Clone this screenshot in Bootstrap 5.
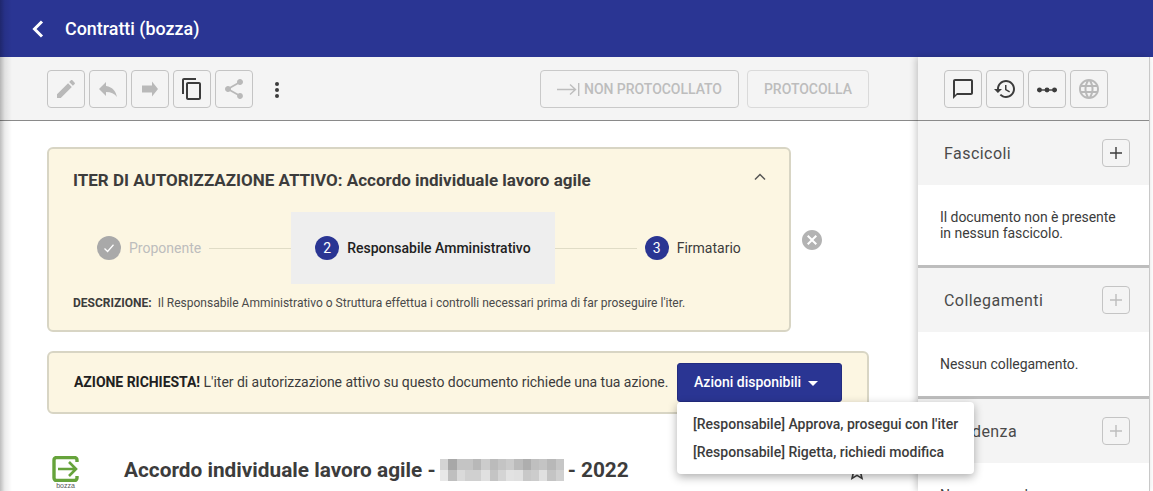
<!DOCTYPE html>
<html lang="it">
<head>
<meta charset="utf-8">
<title>Contratti (bozza)</title>
<link href="https://cdn.jsdelivr.net/npm/bootstrap@5.3.0/dist/css/bootstrap.min.css" rel="stylesheet">
<style>
html,body{height:491px;overflow:hidden;background:#fff}
body{font-family:Roboto,"Liberation Sans",sans-serif;font-size:14px;color:#3c3c3c;position:relative}
.edge-shade{position:absolute;left:0;top:0;width:12px;height:491px;background:linear-gradient(to right,rgba(0,0,0,.26),rgba(0,0,0,.08) 40%,rgba(0,0,0,0));pointer-events:none;z-index:5}
.top-bar{height:57px;background:#2a3593;color:#fff;padding-left:31px}
.top-bar h1{font-size:17.9px;font-weight:500;margin:0 0 0 20px}
.work{height:434px;padding-right:3px}
.main-col{width:918px;flex:none}
.tool-row{height:64px;background:#f4f4f4;border-bottom:1px solid #8a8a8a;padding:13px 49px 0 47px}
.icon-btn{width:38px;height:38px;padding:0;border:1px solid #c4c4c4;border-radius:4px;background:transparent;display:flex;align-items:center;justify-content:center;flex:none}
.icon-btn svg{width:24px;height:24px;fill:#b9b9b9}
.icon-btn.live svg{fill:#3c3c3c}
.dots-btn{width:24px;height:38px;margin-left:12px}
.dots-btn svg{width:24px;height:24px;fill:#3c3c3c}
.proto-btn{height:38px;border:1px solid #c9c9c9;border-radius:4px;background:transparent;color:#bdbdbd;font-weight:500;font-size:14px;padding:0;letter-spacing:-.03px}
.proto-wide{width:199px}
.proto-narrow{width:122px;border-color:#dadada}
.iter-box{width:744px;height:185px;margin:26px 0 0 47px;background:#fcf6e2;border:2px solid #d8d5c4;border-radius:6px;padding:0 24px;position:relative}
.iter-box h2{font-size:17px;font-weight:700;margin:0;line-height:20px;padding-top:21px;color:#3c3c3c}
.chev{position:absolute;right:20px;top:19px;width:18px;height:18px}
.steps{margin-top:22px;height:72px}
.step-item{height:72px;padding:0 8px 0 24px}
.step-item.now{background:#eee;padding:0 24px;color:#212121;font-weight:500}
.step-item.last{padding-left:8px}
.step-item.done{color:#bdbdbd}
.step-dot{width:24px;height:24px;border-radius:50%;background:#2a3593;color:#fff;font-size:14px;flex:none}
.step-dot.ok{background:#a9a9a9}
.step-line{width:82px;height:1px;background:#e0dcc6;flex:none}
.descr{font-size:12px;margin-top:12px;line-height:14px;color:#4a4a4a}
.descr b{color:#3c3c3c;margin-right:3px;font-weight:700}
.close-ic{width:24px;height:24px;fill:#b3b3b3;position:absolute;left:751px;top:79px}
.action-box{width:822px;height:63px;margin:19px 0 0 47px;background:#fcf6e2;border:2px solid #d8d5c4;border-radius:6px;padding:0 25px;position:relative}
.action-box b{color:#212121}
.action-box .msg{color:#3c3c3c;letter-spacing:-.035px}
.go-btn{position:absolute;left:628px;top:10px;width:165px;height:39px;background:#2a3593;color:#fff;font-size:14px;font-weight:500;border:1px solid #232c80;border-radius:3px;padding:0 0 0 16px;text-align:left}
.go-btn::after{margin-left:7px;vertical-align:1px;border-top-width:5px;border-left-width:5px;border-right-width:5px}
.act-menu{position:absolute;left:628px;top:49px;width:297px;height:72px;margin:0;padding:8px 0;border:0;border-radius:4px;box-shadow:0 3px 10px rgba(0,0,0,.32);z-index:10;display:block}
.act-menu .dropdown-item{padding:0 16px;height:28px;line-height:28px;font-size:14px;font-weight:500;color:#3c3c3c}
.doc-row{margin:42px 0 0 52px;position:relative}
.logo-wrap{width:27px;flex:none;margin-right:45px;text-align:center}
.logo-wrap svg{display:block;width:27px;height:26px}
.logo-cap{display:block;font-family:"Liberation Sans",sans-serif;font-size:7px;line-height:7px;color:#555}
.doc-title{font-size:20.8px;font-weight:700;color:#3c3c3c;line-height:28px;margin:0;white-space:nowrap}
.mosaic{width:124px;height:22px;margin:0 4px 0 4px;flex:none}
.fav-star{position:absolute;left:793px;top:3px;width:24px;height:24px;fill:#3c3c3c}
.side-col{width:232px;flex:none;border-right:1px solid #c8c8c8;box-shadow:-2px 0 7px rgba(0,0,0,.2);position:relative;z-index:1;background:#fff;overflow:hidden}
.side-tools{height:64px;background:#f4f4f4;border-bottom:1px solid #8a8a8a;padding:13px 0 0 26px}
.side-head{height:64px;background:#f4f4f4;padding:0 19px 0 26px;font-size:16px;color:#4a4a4a;letter-spacing:.45px}
.side-head span{padding-top:2px}
.plus-btn{width:28px;height:28px;border:1px solid #c4c4c4;border-radius:4px;background:transparent;padding:0;display:flex;align-items:center;justify-content:center}
.plus-btn svg{width:16px;height:16px;fill:#3c3c3c}
.plus-btn.off svg{fill:#bdbdbd}
.side-body{padding:24px 19px 0 22px;line-height:16px;font-size:14px;color:#3c3c3c;border-bottom:3px solid #bdbdbd;letter-spacing:-.05px}
.sb-a{height:83px}
.sb-b{height:67px}
.sb-c{height:60px;border-bottom:0}
</style>
</head>
<body>
<div class="edge-shade"></div>
<header class="top-bar d-flex align-items-center">
  <svg width="14" height="20" viewBox="0 0 14 20" aria-hidden="true"><path d="M11 2.5 3.5 10 11 17.5" fill="none" stroke="#fff" stroke-width="3"/></svg>
  <h1>Contratti (bozza)</h1>
</header>
<div class="work d-flex">
  <div class="main-col">
    <div class="tool-row d-flex gap-1 justify-content-between">
      <div class="d-flex tool-set">
        <button class="icon-btn" type="button"><svg viewBox="0 0 24 24"><path d="M3 17.25V21h3.75L17.81 9.94l-3.75-3.75L3 17.25zM20.71 7.04c.39-.39.39-1.02 0-1.41l-2.34-2.34c-.39-.39-1.02-.39-1.41 0l-1.83 1.83 3.75 3.75 1.83-1.83z"/></svg></button>
        <button class="icon-btn ms-1" type="button"><svg viewBox="0 0 24 24"><path d="M10 9V5l-7 7 7 7v-4.1c5 0 8.5 1.6 11 5.1-1-5-4-10-11-11z"/></svg></button>
        <button class="icon-btn ms-1" type="button"><svg viewBox="0 0 24 24"><path d="M4 8.5h10V4.5l6 7.5-6 7.5v-4H4z"/></svg></button>
        <button class="icon-btn live ms-1" type="button"><svg viewBox="0 0 24 24"><path d="M16 1H4c-1.1 0-2 .9-2 2v14h2V3h12V1zm3 4H8c-1.1 0-2 .9-2 2v14c0 1.1.9 2 2 2h11c1.1 0 2-.9 2-2V7c0-1.1-.9-2-2-2zm0 16H8V7h11v14z"/></svg></button>
        <button class="icon-btn ms-1" type="button"><svg viewBox="0 0 24 24"><path d="M18 16.08c-.76 0-1.44.3-1.96.77L8.91 12.7c.05-.23.09-.46.09-.7s-.04-.47-.09-.7l7.05-4.11c.54.5 1.25.81 2.04.81 1.66 0 3-1.34 3-3s-1.34-3-3-3-3 1.34-3 3c0 .24.04.47.09.7L8.04 9.81C7.5 9.31 6.79 9 6 9c-1.66 0-3 1.34-3 3s1.34 3 3 3c.79 0 1.5-.31 2.04-.81l7.12 4.16c-.05.21-.08.43-.08.65 0 1.61 1.31 2.92 2.92 2.92 1.61 0 2.92-1.31 2.92-2.92s-1.31-2.92-2.92-2.92z"/></svg></button>
        <div class="dots-btn d-flex align-items-center justify-content-center"><svg viewBox="0 0 24 24"><circle cx="12" cy="7" r="2"/><circle cx="12" cy="13" r="2"/><circle cx="12" cy="19" r="2"/></svg></div>
      </div>
      <div class="d-flex gap-2">
        <button class="proto-btn proto-wide d-flex align-items-center justify-content-center" type="button"><svg class="me-1" width="23" height="14" viewBox="0 0 23 14" aria-hidden="true"><path d="M0 7.5h18M13 2.5l5.5 5-5.5 5M21.7 1v13" fill="none" stroke="#bdbdbd" stroke-width="1.4"/></svg>NON PROTOCOLLATO</button>
        <button class="proto-btn proto-narrow" type="button">PROTOCOLLA</button>
      </div>
    </div>

    <section class="iter-box">
      <h2>ITER DI AUTORIZZAZIONE ATTIVO: Accordo individuale lavoro agile</h2>
      <svg class="chev" viewBox="0 0 18 18" aria-hidden="true"><path d="M4 11.5 9 6.5l5 5" fill="none" stroke="#555" stroke-width="1.5"/></svg>
      <div class="steps d-flex align-items-center">
        <div class="step-item done d-flex align-items-center gap-2"><span class="step-dot ok d-flex align-items-center justify-content-center"><svg width="14" height="14" viewBox="0 0 14 14" aria-hidden="true"><path d="M2.5 7.5 5.6 10.5 11.5 3.8" fill="none" stroke="#fff" stroke-width="1.3"/></svg></span>Proponente</div>
        <div class="step-line"></div>
        <div class="step-item now d-flex align-items-center gap-2"><span class="step-dot d-flex align-items-center justify-content-center fw-normal">2</span>Responsabile Amministrativo</div>
        <div class="step-line"></div>
        <div class="step-item last d-flex align-items-center gap-2"><span class="step-dot d-flex align-items-center justify-content-center">3</span>Firmatario</div>
      </div>
      <p class="descr mb-0"><b>DESCRIZIONE:</b> Il Responsabile Amministrativo o Struttura effettua i controlli necessari prima di far proseguire l'iter.</p>
      <svg class="close-ic" viewBox="0 0 24 24" aria-hidden="true"><path d="M12 2C6.47 2 2 6.47 2 12s4.47 10 10 10 10-4.47 10-10S17.53 2 12 2zm5 13.59L15.59 17 12 13.41 8.41 17 7 15.59 10.59 12 7 8.41 8.41 7 12 10.59 15.59 7 17 8.41 13.41 12 17 15.59z"/></svg>
    </section>

    <section class="action-box d-flex align-items-center">
      <span class="msg"><b>AZIONE RICHIESTA!</b> L'iter di autorizzazione attivo su questo documento richiede una tua azione.</span>
      <button class="go-btn dropdown-toggle" type="button">Azioni disponibili</button>
      <ul class="dropdown-menu act-menu list-unstyled">
        <li><a class="dropdown-item" href="#">[Responsabile] Approva, prosegui con l'iter</a></li>
        <li><a class="dropdown-item" href="#">[Responsabile] Rigetta, richiedi modifica</a></li>
      </ul>
    </section>

    <div class="doc-row d-flex align-items-start">
      <div class="logo-wrap">
        <svg viewBox="0 0 27 26" aria-hidden="true"><path d="M25 6V4a2.5 2.5 0 0 0-2.5-2.5h-18A2.5 2.5 0 0 0 2 4v18a2.5 2.5 0 0 0 2.5 2.5h18A2.5 2.5 0 0 0 25 22v-2" fill="none" stroke="#66a33b" stroke-width="3.4"/><path d="M6 13h18M17 6l7 7-7 7" fill="none" stroke="#66a33b" stroke-width="2.6"/></svg>
        <span class="logo-cap">bozza</span>
      </div>
      <div class="d-flex align-items-center">
        <h3 class="doc-title">Accordo individuale lavoro agile -</h3>
        <svg class="mosaic" viewBox="0 0 15 2" preserveAspectRatio="none" aria-hidden="true" shape-rendering="crispEdges">
          <rect x="0" y="0" width="1" height="1" fill="#d4d4d4"/><rect x="1" y="0" width="1" height="1" fill="#a8a8a8"/><rect x="2" y="0" width="1" height="1" fill="#c4c4c4"/><rect x="3" y="0" width="1" height="1" fill="#c4c4c4"/><rect x="4" y="0" width="1" height="1" fill="#b8b8b8"/><rect x="5" y="0" width="1" height="1" fill="#cccccc"/><rect x="6" y="0" width="1" height="1" fill="#bbbbbb"/><rect x="7" y="0" width="1" height="1" fill="#c4c4c4"/><rect x="8" y="0" width="1" height="1" fill="#cbcbcb"/><rect x="9" y="0" width="1" height="1" fill="#bbbbbb"/><rect x="10" y="0" width="1" height="1" fill="#aeaeae"/><rect x="11" y="0" width="1" height="1" fill="#bfbfbf"/><rect x="12" y="0" width="1" height="1" fill="#c4c4c4"/><rect x="13" y="0" width="1" height="1" fill="#b8b8b8"/><rect x="14" y="0" width="1" height="1" fill="#c6c6c6"/>
          <rect x="0" y="1" width="1" height="1" fill="#e8e8e8"/><rect x="1" y="1" width="1" height="1" fill="#bfbfbf"/><rect x="2" y="1" width="1" height="1" fill="#dadada"/><rect x="3" y="1" width="1" height="1" fill="#d0d0d0"/><rect x="4" y="1" width="1" height="1" fill="#d0d0d0"/><rect x="5" y="1" width="1" height="1" fill="#e0e0e0"/><rect x="6" y="1" width="1" height="1" fill="#c4c4c4"/><rect x="7" y="1" width="1" height="1" fill="#d4d4d4"/><rect x="8" y="1" width="1" height="1" fill="#e2e2e2"/><rect x="9" y="1" width="1" height="1" fill="#e0e0e0"/><rect x="10" y="1" width="1" height="1" fill="#c8c8c8"/><rect x="11" y="1" width="1" height="1" fill="#cccccc"/><rect x="12" y="1" width="1" height="1" fill="#e0e0e0"/><rect x="13" y="1" width="1" height="1" fill="#c4c4c4"/><rect x="14" y="1" width="1" height="1" fill="#d0d0d0"/>
        </svg>
        <span class="doc-title">- 2022</span>
      </div>
      <svg class="fav-star" viewBox="0 0 24 24" aria-hidden="true"><path d="M22 9.24l-7.19-.62L12 2 9.19 8.63 2 9.24l5.46 4.73L5.82 21 12 17.27 18.18 21l-1.63-7.03L22 9.24zM12 15.4l-3.76 2.27 1-4.28-3.32-2.88 4.38-.38L12 6.1l1.71 4.04 4.38.38-3.32 2.88 1 4.28L12 15.4z"/></svg>
    </div>
  </div>

  <aside class="side-col">
    <div class="side-tools d-flex">
      <button class="icon-btn live" type="button"><svg viewBox="0 0 24 24"><path d="M20 2H4c-1.1 0-2 .9-2 2v18l4-4h14c1.1 0 2-.9 2-2V4c0-1.1-.9-2-2-2zm0 14H6l-2 2V4h16v12z"/></svg></button>
      <button class="icon-btn live ms-1" type="button"><svg viewBox="0 0 24 24"><path d="M13 3c-4.97 0-9 4.03-9 9H1l3.89 3.89.07.14L9 12H6c0-3.87 3.13-7 7-7s7 3.13 7 7-3.13 7-7 7c-1.93 0-3.68-.79-4.94-2.06l-1.42 1.42C8.27 19.99 10.51 21 13 21c4.97 0 9-4.03 9-9s-4.03-9-9-9zm-1 5v5l4.28 2.54.72-1.21-3.5-2.08V8H12z"/></svg></button>
      <button class="icon-btn live ms-1" type="button"><svg viewBox="0 0 24 24"><path d="M2 12.3h20v1.4H2z"/><circle cx="4.5" cy="13" r="2.4"/><circle cx="12" cy="13" r="2.4"/><circle cx="19.5" cy="13" r="2.4"/></svg></button>
      <button class="icon-btn ms-1" type="button"><svg viewBox="0 0 24 24"><path d="M11.99 2C6.47 2 2 6.48 2 12s4.47 10 9.99 10C17.52 22 22 17.52 22 12S17.52 2 11.99 2zm6.93 6h-2.95c-.32-1.25-.78-2.45-1.38-3.56 1.84.63 3.37 1.91 4.33 3.56zM12 4.04c.83 1.2 1.48 2.53 1.91 3.96h-3.82c.43-1.43 1.08-2.76 1.91-3.96zM4.26 14C4.1 13.36 4 12.69 4 12s.1-1.36.26-2h3.38c-.08.66-.14 1.32-.14 2 0 .68.06 1.34.14 2H4.26zm.82 2h2.95c.32 1.25.78 2.45 1.38 3.56-1.84-.63-3.37-1.9-4.33-3.56zm2.95-8H5.08c.96-1.66 2.49-2.93 4.33-3.56C8.81 5.55 8.35 6.75 8.03 8zM12 19.96c-.83-1.2-1.48-2.53-1.91-3.96h3.82c-.43 1.43-1.08 2.76-1.91 3.96zM14.34 14H9.66c-.09-.66-.16-1.32-.16-2 0-.68.07-1.35.16-2h4.68c.09.65.16 1.32.16 2 0 .68-.07 1.34-.16 2zm.25 5.56c.6-1.11 1.06-2.31 1.38-3.56h2.95c-.96 1.65-2.49 2.93-4.33 3.56zM16.36 14c.08-.66.14-1.32.14-2 0-.68-.06-1.34-.14-2h3.38c.16.64.26 1.31.26 2s-.1 1.36-.26 2h-3.38z"/></svg></button>
    </div>
    <div class="side-head d-flex align-items-center justify-content-between"><span>Fascicoli</span><button class="plus-btn" type="button"><svg viewBox="0 0 16 16"><path d="M7.3 2h1.4v5.3H14v1.4H8.7V14H7.3V8.7H2V7.3h5.3z"/></svg></button></div>
    <div class="side-body sb-a">Il documento non è presente<br>in nessun fascicolo.</div>
    <div class="side-head d-flex align-items-center justify-content-between"><span>Collegamenti</span><button class="plus-btn off" type="button"><svg viewBox="0 0 16 16"><path d="M7.3 2h1.4v5.3H14v1.4H8.7V14H7.3V8.7H2V7.3h5.3z"/></svg></button></div>
    <div class="side-body sb-b">Nessun collegamento.</div>
    <div class="side-head d-flex align-items-center justify-content-between"><span>Scadenza</span><button class="plus-btn off" type="button"><svg viewBox="0 0 16 16"><path d="M7.3 2h1.4v5.3H14v1.4H8.7V14H7.3V8.7H2V7.3h5.3z"/></svg></button></div>
    <div class="side-body sb-c">Nessuna scadenza.</div>
  </aside>
</div>
<script src="https://cdn.jsdelivr.net/npm/bootstrap@5.3.0/dist/js/bootstrap.bundle.min.js"></script>
</body>
</html>
